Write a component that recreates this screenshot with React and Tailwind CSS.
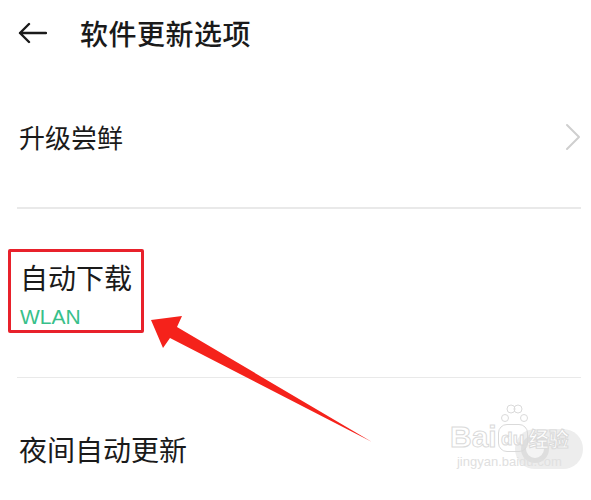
import React from "react";

const font = { fontFamily: '"Noto Sans CJK SC", "Noto Sans", sans-serif' };

export default function App() {
  return (
    <div
      className="relative w-[591px] h-[500px] overflow-hidden bg-white text-[#1a1a1a]"
      style={font}
    >
      {/* Header */}
      <div className="flex h-[66px] items-center pl-[17px]">
        <svg width="30" height="22" viewBox="0 0 30 22" fill="none">
          <path
            d="M29 11H3M12 2L3 11l9 9"
            stroke="#1a1a1a"
            strokeWidth="2.4"
            strokeLinecap="round"
            strokeLinejoin="round"
          />
        </svg>
        <div className="ml-[33px] text-[28px] leading-[36px] font-medium tracking-[0.5px]">
          软件更新选项
        </div>
      </div>

      {/* Row 1 */}
      <div className="flex h-[141px] items-center justify-between pl-[19px] pr-[10px]">
        <div className="text-[26px] leading-[36px]">升级尝鲜</div>
        <svg width="16" height="28" viewBox="0 0 16 28" fill="none">
          <path
            d="M2 2l12 12L2 26"
            stroke="#cfcfcf"
            strokeWidth="2"
            strokeLinecap="round"
            strokeLinejoin="round"
          />
        </svg>
      </div>
      <div className="ml-[17px] mr-[10px] h-[1.5px] bg-[#e9e9e9]" />

      {/* Row 2 */}
      <div className="relative h-[168px] pl-[20px] pt-[50px]">
        <div className="text-[28px] leading-[36px]">自动下载</div>
        <div
          className="mt-[9px] text-[21px] leading-[26px] text-[#37c08a]"
          style={{ fontFamily: '"Liberation Sans", Arial, sans-serif' }}
        >
          WLAN
        </div>
        <div className="absolute left-[8px] top-[40px] h-[84px] w-[136px] rounded-[2px] border-[3px] border-[#e8212b]" />
      </div>
      <div className="ml-[17px] mr-[10px] h-[1.5px] bg-[#e9e9e9]" />

      {/* Row 3 */}
      <div className="flex h-[141px] items-center justify-between pl-[19px] pr-[8px]">
        <div className="text-[28px] leading-[36px]">夜间自动更新</div>
        <div className="flex h-[40px] w-[68px] items-center rounded-full bg-[#ededed] pl-[6px]">
          <div className="h-[28px] w-[28px] rounded-full border-[5px] border-[#dedede] bg-[#f4f4f4]" />
        </div>
      </div>

      {/* Red arrow annotation */}
      <svg
        className="pointer-events-none absolute left-0 top-0"
        width="591"
        height="500"
        viewBox="0 0 591 500"
      >
        <polygon
          points="151,320 182,316 177,327 372,442 170,338 163,348"
          fill="#f5221b"
        />
      </svg>

      {/* Watermark */}
      <div className="pointer-events-none absolute left-[450px] top-[422px] flex flex-col items-center">
        <div className="flex items-end">
          <span
            className="text-[30px] leading-[30px] font-bold text-white [-webkit-text-stroke:1px_#dadada]"
            style={{ fontFamily: '"Liberation Sans", Arial, sans-serif' }}
          >
            Bai
          </span>
          <span className="relative mx-[1px] flex h-[28px] w-[30px] items-center justify-center rounded-[9px] border border-[#dadada]">
            <span
              className="text-[19px] leading-[19px] font-bold text-white [-webkit-text-stroke:1px_#dadada]"
              style={{ fontFamily: '"Liberation Sans", Arial, sans-serif' }}
            >
              du
            </span>
            <svg className="absolute left-[1px] top-[-22px]" width="28" height="22" viewBox="0 0 28 22" fill="none">
              <circle cx="5" cy="15" r="3.5" stroke="#dadada" strokeWidth="1" />
              <circle cx="11" cy="6" r="4" stroke="#dadada" strokeWidth="1" />
              <circle cx="18" cy="6" r="4" stroke="#dadada" strokeWidth="1" />
              <circle cx="24" cy="15" r="3.5" stroke="#dadada" strokeWidth="1" />
            </svg>
          </span>
          <span className="text-[20px] leading-[26px] font-bold text-white [-webkit-text-stroke:1px_#dadada]">
            经验
          </span>
        </div>
        <div
          className="mt-[2px] text-[13px] leading-[15px] text-[#e0e0e0]"
          style={{ fontFamily: '"Liberation Sans", Arial, sans-serif' }}
        >
          jingyan.baidu.com
        </div>
      </div>
    </div>
  );
}
